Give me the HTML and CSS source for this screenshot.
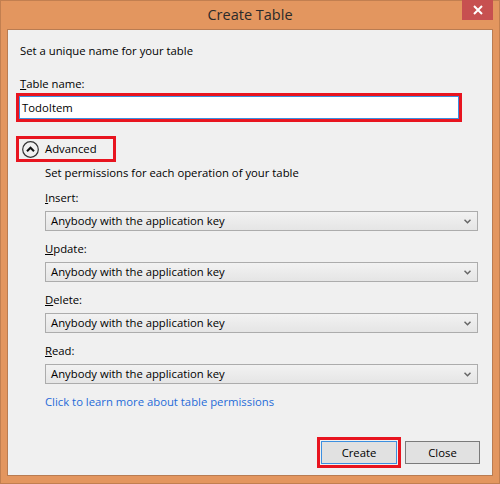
FILE: index.html
```html
<!DOCTYPE html>
<html>
<head>
<meta charset="utf-8">
<link rel="stylesheet" href="styles.css">
</head>
<body>
<div class="window">
  <div class="titlebar">
    <div class="title">Create Table</div>
    <div class="close">
      <svg width="10" height="10" viewBox="0 0 10 10"><path d="M1 1 L9 9 M9 1 L1 9" stroke="#fff" stroke-width="2" fill="none"/></svg>
    </div>
  </div>
  <div class="client">
    <p class="intro">Set a unique name for your table</p>
    <div class="field-label"><u>T</u>able name:</div>
    <div class="hl hl-input"><div class="text-input">TodoItem</div></div>
    <div class="hl hl-adv">
      <svg class="adv-icon" width="17" height="17" viewBox="0 0 17 17"><circle cx="8.5" cy="8.5" r="7.8" stroke="#333" stroke-width="1.2" fill="none"/><path d="M5 10.2 L8.5 6.7 L12 10.2" stroke="#111" stroke-width="2" fill="none"/></svg>
      <span>Advanced</span>
    </div>
    <div class="perms">
      <p class="perm-desc">Set permissions for each operation of your table</p>
      <div class="perm-label"><u>I</u>nsert:</div>
      <div class="select"><span>Anybody with the application key</span><svg width="7" height="5" viewBox="0 0 7 5"><path d="M0.5 0.8 L3.5 3.8 L6.5 0.8" stroke="#666" stroke-width="1.5" fill="none"/></svg></div>
      <div class="perm-label"><u>U</u>pdate:</div>
      <div class="select"><span>Anybody with the application key</span><svg width="7" height="5" viewBox="0 0 7 5"><path d="M0.5 0.8 L3.5 3.8 L6.5 0.8" stroke="#666" stroke-width="1.5" fill="none"/></svg></div>
      <div class="perm-label"><u>D</u>elete:</div>
      <div class="select"><span>Anybody with the application key</span><svg width="7" height="5" viewBox="0 0 7 5"><path d="M0.5 0.8 L3.5 3.8 L6.5 0.8" stroke="#666" stroke-width="1.5" fill="none"/></svg></div>
      <div class="perm-label"><u>R</u>ead:</div>
      <div class="select"><span>Anybody with the application key</span><svg width="7" height="5" viewBox="0 0 7 5"><path d="M0.5 0.8 L3.5 3.8 L6.5 0.8" stroke="#666" stroke-width="1.5" fill="none"/></svg></div>
      <a class="link">Click to learn more about table permissions</a>
    </div>
    <div class="buttons">
      <div class="hl hl-btn"><div class="btn btn-primary">Create</div></div>
      <div class="btn">Close</div>
    </div>
  </div>
</div>
</body>
</html>
```
FILE: styles.css
```css
html, body {
  margin: 0;
  padding: 0;
}
body {
  width: 500px;
  height: 484px;
  overflow: hidden;
  background: #e3965f;
  font-family: "Open Sans", "Noto Sans", sans-serif;
}
.window {
  box-sizing: border-box;
  width: 500px;
  height: 484px;
  border: 1px solid #c27f50;
  display: flex;
  flex-direction: column;
}
.titlebar {
  height: 28px;
  display: grid;
  grid-template-columns: 1fr auto 1fr;
  align-items: center;
  padding: 0 6px;
}
.title {
  grid-column: 2;
  font-size: 14.5px;
  color: #2a2a2a;
  line-height: 20px;
}
.close {
  grid-column: 3;
  justify-self: end;
  align-self: start;
  margin-top: -1px;
  width: 31px;
  height: 20px;
  background: #c75050;
  display: flex;
  align-items: center;
  justify-content: center;
}
.client {
  box-sizing: border-box;
  height: 447px;
  margin: 0 6px;
  border: 1px solid #b97c52;
  background: #f0f0f0;
  display: flex;
  flex-direction: column;
  padding: 13px 12px 7px 8px;
  font-size: 11.3px;
  line-height: 16px;
  color: #000;
}
.intro {
  margin: 0 0 0 4px;
}
.field-label {
  margin: 17px 0 0 4px;
}
.hl {
  box-sizing: border-box;
  border: 3px solid #e8141f;
}
.hl-input {
  margin-top: 1px;
  width: 446px;
  height: 29px;
}
.text-input {
  box-sizing: border-box;
  height: 23px;
  border: 1px solid #3c8fe0;
  background: #fff;
  padding-left: 2px;
  line-height: 21px;
}
.hl-adv {
  margin-top: 14px;
  width: 100px;
  height: 26px;
  display: flex;
  align-items: center;
  padding-left: 3px;
  gap: 6px;
}
.adv-icon {
  display: block;
}
.perms {
  margin-left: 29px;
  width: 433px;
  display: flex;
  flex-direction: column;
}
.perm-desc {
  margin: 3px 0 0;
}
.perm-label {
  margin-top: 10px;
}
.perm-desc + .perm-label {
  margin-top: 9px;
}
.select {
  box-sizing: border-box;
  margin-top: 5px;
  height: 20px;
  border: 1px solid #acacac;
  background: linear-gradient(#f2f2f2, #e5e5e5);
  padding: 0 6px 0 5px;
  display: flex;
  align-items: center;
  justify-content: space-between;
}
.select svg {
  display: block;
}
.link {
  margin-top: 10px;
  color: #1f6bd8;
  align-self: flex-start;
}
.buttons {
  margin-top: auto;
  display: flex;
  justify-content: flex-end;
  align-items: center;
  gap: 4px;
}
.hl-btn {
  width: 84px;
  height: 31px;
  padding: 1px;
}
.btn {
  box-sizing: border-box;
  width: 75px;
  height: 23px;
  background: #e1e1e1;
  border: 1px solid #7a7a7a;
  display: flex;
  align-items: center;
  justify-content: center;
}
.btn-primary {
  width: 76px;
  border-color: #3c8fe0;
}
```
